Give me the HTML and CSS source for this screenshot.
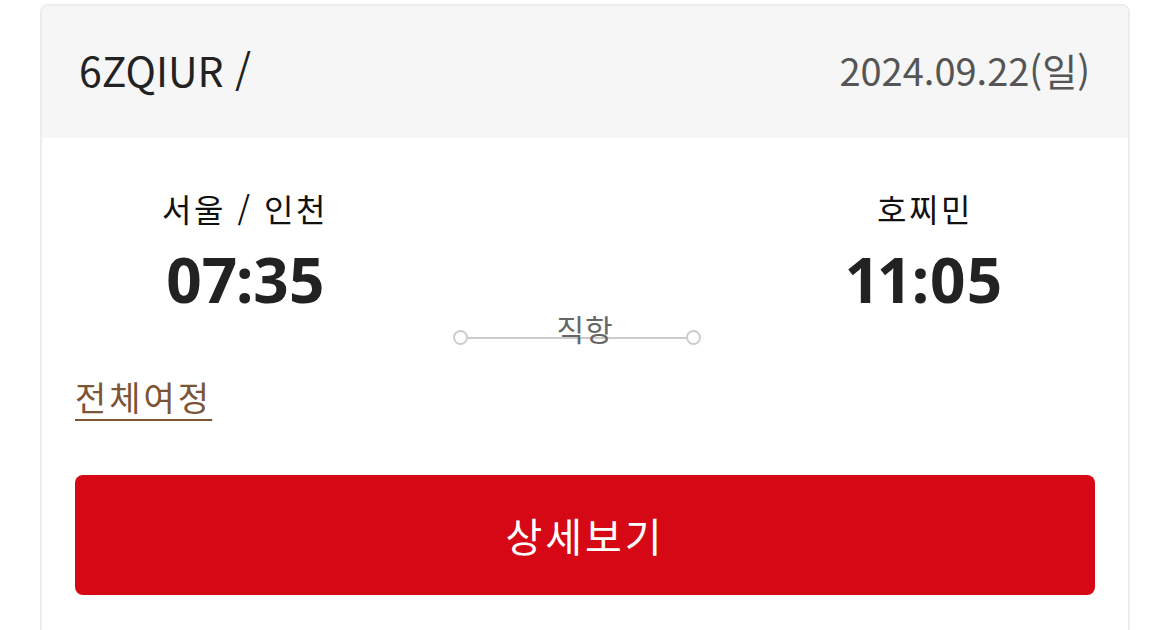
FILE: index.html
```html
<!DOCTYPE html>
<html lang="ko">
<head>
<meta charset="utf-8">
<link rel="stylesheet" href="styles.css">
</head>
<body>
<div class="card">
  <div class="card-head">
    <span class="pnr">6ZQIUR /</span>
    <span class="date">2024.09.22(일)</span>
  </div>
  <div class="card-body">
    <div class="route">
      <div class="stop">
        <div class="city">서울 / 인천</div>
        <div class="time">07:35</div>
      </div>
      <div class="mid">
        <div class="line"><span class="dot"></span><span class="bar"></span><span class="dot"></span></div>
        <div class="direct">직항</div>
      </div>
      <div class="stop">
        <div class="city">호찌민</div>
        <div class="time">11:05</div>
      </div>
    </div>
    <a class="itinerary" href="#">전체여정</a>
    <button class="detail">상세보기</button>
  </div>
</div>
</body>
</html>
```
FILE: styles.css
```css
html, body {
  margin: 0;
  padding: 0;
  background: #fff;
}
body {
  font-family: "Noto Sans CJK KR", "Noto Sans", sans-serif;
  color: #222;
  padding: 4px 40px 0 40px;
  height: 630px;
  overflow: hidden;
  box-sizing: border-box;
}
.card {
  border: 2px solid #ececec;
  border-radius: 8px;
  height: 700px;
  overflow: hidden;
}
.card-head {
  background: #f6f6f6;
  height: 132px;
  display: flex;
  align-items: center;
  justify-content: space-between;
  padding: 0 38px 0 37px;
}
.pnr {
  font-size: 41px;
  color: #222;
  margin-top: -6px;
}
.date {
  font-size: 38px;
  color: #555;
  margin-top: -6px;
}
.card-body {
  padding: 0 33px;
}
.route {
  display: grid;
  grid-template-columns: 1fr 1fr 1fr;
  padding-top: 48px;
}
.stop {
  display: flex;
  flex-direction: column;
  align-items: center;
}
.city {
  font-size: 32px;
  line-height: 44px;
  letter-spacing: 2.5px;
  color: #111;
}
.time {
  font-family: "Noto Sans", "Open Sans", sans-serif;
  font-size: 62px;
  font-weight: 700;
  line-height: 70px;
  margin-top: 14px;
  font-variant-numeric: proportional-nums;
  color: #222;
}
.mid {
  position: relative;
  padding-top: 144px;
}
.line {
  display: flex;
  align-items: center;
  margin: 0 54px 0 38px;
}
.dot {
  width: 11px;
  height: 11px;
  border: 2px solid #cccccc;
  border-radius: 50%;
  background: #fff;
  flex: none;
}
.bar {
  flex: 1;
  height: 2px;
  background: #cccccc;
}
.direct {
  position: absolute;
  left: 0;
  right: 0;
  top: 123px;
  text-align: center;
  font-size: 30px;
  line-height: 38px;
  letter-spacing: 1px;
  color: #666;
}
.itinerary {
  display: inline-block;
  margin-top: 30px;
  font-size: 34px;
  line-height: 44px;
  letter-spacing: 3px;
  color: #7b5535;
  text-decoration: underline;
  text-decoration-thickness: 2px;
  text-underline-offset: 8px;
}
.detail {
  display: block;
  width: 100%;
  height: 120px;
  margin-top: 56px;
  border: none;
  border-radius: 8px;
  background: #d60815;
  color: #fff;
  font-family: "Noto Sans CJK KR", "Noto Sans", sans-serif;
  font-size: 40px;
  letter-spacing: 3px;
}
```
